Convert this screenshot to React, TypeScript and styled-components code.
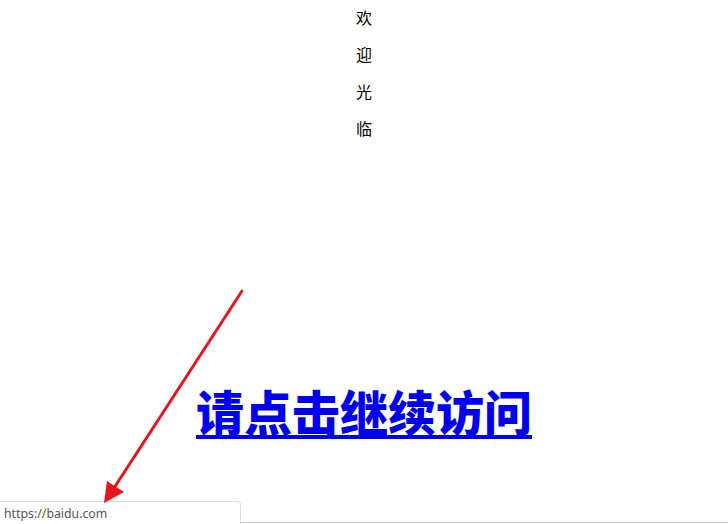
import React from "react";
import styled, { createGlobalStyle } from "styled-components";

const GlobalStyle = createGlobalStyle`
  html, body {
    margin: 0;
    padding: 0;
    background: #ffffff;
  }
  body {
    font-family: "Noto Sans CJK SC", "Liberation Sans", sans-serif;
    overflow: hidden;
  }
`;

const Page = styled.div`
  position: relative;
  width: 728px;
  height: 524px;
  display: flex;
  flex-direction: column;
  align-items: center;
  overflow: hidden;
`;

const Welcome = styled.div`
  display: flex;
  flex-direction: column;
  align-items: center;
`;

const Char = styled.div`
  font-family: "Noto Sans CJK SC", sans-serif;
  font-size: 16px;
  line-height: 37px;
  margin-top: -1px;
  margin-bottom: 1px;
  color: #000;
`;

const Heading = styled.a`
  margin-top: 232px;
  font-family: "Noto Sans CJK SC", sans-serif;
  font-size: 48px;
  font-weight: 900;
  line-height: 60px;
  color: #0000ee;
  text-decoration: underline;
  text-decoration-thickness: 4px;
  text-underline-offset: 4px;
  cursor: pointer;
`;

const Arrow = styled.svg`
  position: absolute;
  left: 0;
  top: 0;
  pointer-events: none;
`;

const BottomEdge = styled.div`
  position: absolute;
  left: 0;
  right: 0;
  bottom: 1px;
  height: 1px;
  background: #c8c8c8;
`;

const StatusBar = styled.div`
  position: absolute;
  left: 0;
  bottom: 0;
  width: 241px;
  height: 23px;
  box-sizing: border-box;
  background: #ffffff;
  border: 1px solid #dedede;
  border-left: none;
  border-bottom: none;
  border-top-right-radius: 4px;
  display: flex;
  align-items: center;
  padding-left: 4px;
  font-family: "Noto Sans", "Liberation Sans", sans-serif;
  font-size: 12.3px;
  color: #555;
`;

export default function App() {
  return (
    <>
      <GlobalStyle />
      <Page>
        <Welcome>
          {["欢", "迎", "光", "临"].map((c) => (
            <Char key={c}>{c}</Char>
          ))}
        </Welcome>
        <Heading>请点击继续访问</Heading>
        <BottomEdge />
        <StatusBar>https://baidu.com</StatusBar>
        <Arrow width="728" height="524" viewBox="0 0 728 524">
          <line
            x1="242"
            y1="291"
            x2="114"
            y2="488"
            stroke="#e8141c"
            strokeWidth="3"
            strokeLinecap="round"
          />
          <polygon points="104,503 107,481 124,492" fill="#e8141c" />
        </Arrow>
      </Page>
    </>
  );
}
